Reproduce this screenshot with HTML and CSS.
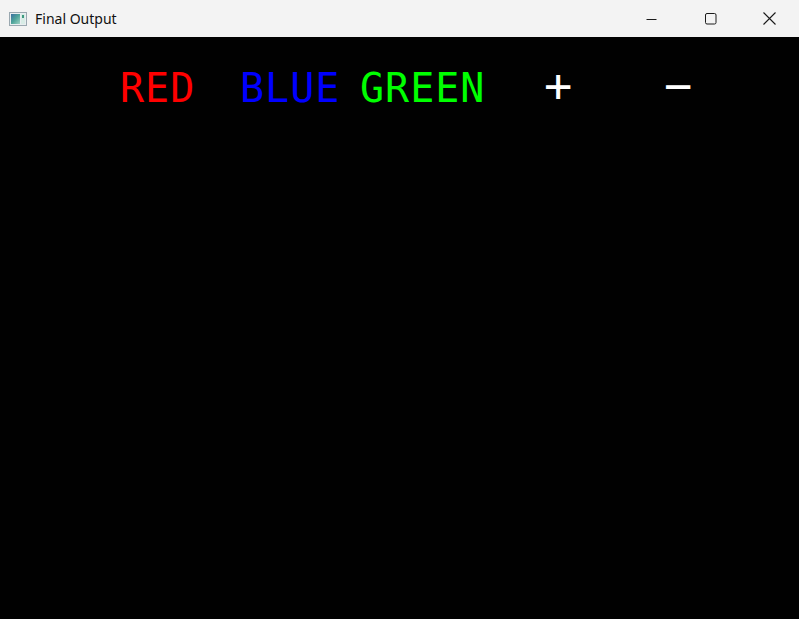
FILE: index.html
```html
<!DOCTYPE html>
<html lang="en">
<head>
<meta charset="utf-8">
<title>Final Output</title>
<link rel="stylesheet" href="styles.css">
</head>
<body>
<div class="window">
  <header class="titlebar">
    <div class="app-icon">
      <svg width="18" height="14" viewBox="0 0 18 14">
        <defs>
          <linearGradient id="g" x1="0" y1="0" x2="1" y2="1">
            <stop offset="0" stop-color="#3a6fa0"/>
            <stop offset="0.5" stop-color="#4fa59a"/>
            <stop offset="1" stop-color="#9fd2c4"/>
          </linearGradient>
        </defs>
        <rect x="0.5" y="0.5" width="17" height="13" fill="#e9eef0" stroke="#9aa8b0"/>
        <rect x="2" y="2" width="9" height="10" fill="url(#g)"/>
        <rect x="12" y="2" width="4" height="10" fill="#d8ece6"/>
        <rect x="13" y="3" width="2" height="3" fill="#3f9a80"/>
      </svg>
    </div>
    <span class="title">Final Output</span>
    <div class="controls">
      <span class="ctl">
        <svg width="12" height="12" viewBox="0 0 12 12"><path d="M0.5 6.5h10" stroke="#1a1a1a" stroke-width="1"/></svg>
      </span>
      <span class="ctl">
        <svg width="12" height="12" viewBox="0 0 12 12"><rect x="0.5" y="0.5" width="10.5" height="10.5" rx="1.5" fill="none" stroke="#1a1a1a" stroke-width="1"/></svg>
      </span>
      <span class="ctl">
        <svg width="13" height="13" viewBox="0 0 13 13"><path d="M0.5 0.5L12.5 12.5M12.5 0.5L0.5 12.5" stroke="#1a1a1a" stroke-width="1.1"/></svg>
      </span>
    </div>
  </header>
  <main class="canvas">
    <div class="labels">
      <span class="label red">RED</span>
      <span class="label blue">BLUE</span>
      <span class="label green">GREEN</span>
      <span class="label sign plus">+</span>
      <span class="label sign minus">&minus;</span>
    </div>
  </main>
</div>
</body>
</html>
```

FILE: styles.css
```css
html, body {
  margin: 0;
  padding: 0;
  width: 799px;
  height: 619px;
  overflow: hidden;
  background: #010101;
}
.window {
  display: flex;
  flex-direction: column;
  width: 799px;
  height: 619px;
}
.titlebar {
  height: 37px;
  flex: none;
  background: #f3f3f3;
  display: flex;
  align-items: center;
  font-family: "Noto Sans", "Open Sans", sans-serif;
  font-size: 14px;
  color: #111;
}
.app-icon {
  width: 18px;
  height: 14px;
  margin-left: 9px;
  margin-right: 8px;
  margin-top: 1px;
  display: flex;
}
.title {
  flex: 1;
}
.controls {
  display: flex;
  height: 37px;
}
.ctl {
  width: 59px;
  height: 37px;
  display: flex;
  align-items: center;
  justify-content: center;
}
.canvas {
  flex: 1;
  background: #010101;
}
.labels {
  display: flex;
  align-items: baseline;
  padding: 29px 0 0 120px;
  font-family: "DejaVu Sans Mono", monospace;
  font-size: 40px;
  line-height: 40px;
  letter-spacing: 1px;
}
.label {
  width: 120px;
}
.red { color: #ff0000; }
.blue { color: #0000ff; }
.green { color: #00ff00; width: 184px; }
.sign {
  color: #ffffff;
  font-size: 47px;
  letter-spacing: 0;
}
```
